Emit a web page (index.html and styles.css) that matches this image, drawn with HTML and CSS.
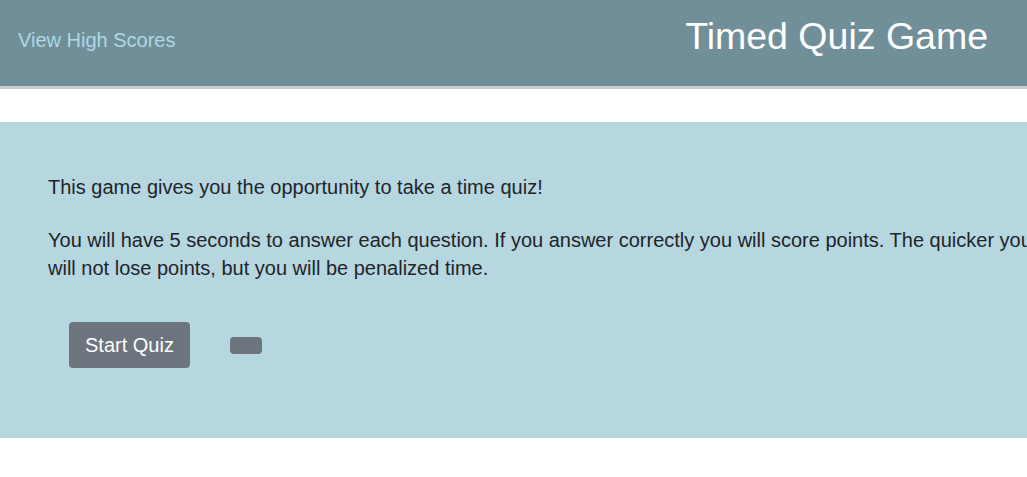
FILE: index.html
```html
<!DOCTYPE html>
<html lang="en">
<head>
<meta charset="utf-8">
<title>Timed Quiz Game</title>
<link rel="stylesheet" href="styles.css">
</head>
<body>
<header class="topbar">
  <a class="scores-link" href="#">View High Scores</a>
  <h1 class="title">Timed Quiz Game</h1>
</header>
<main class="intro">
  <p class="intro-text">This game gives you the opportunity to take a time quiz!</p>
  <p class="intro-text">You will have 5 seconds to answer each question. If you answer correctly you will score points. The quicker you answer the more points you will score. If you answer incorrectly you will not lose points, but you will be penalized time.</p>
  <div class="actions">
    <button class="btn btn-start" type="button">Start Quiz</button>
    <span class="btn btn-empty"></span>
  </div>
</main>
</body>
</html>
```
FILE: styles.css
```css
html { overflow-x: hidden; }
body {
  margin: 0;
  font-family: "Liberation Sans", Arial, sans-serif;
  color: #212529;
  background: #fff;
}
.topbar {
  height: 86px;
  background: #718f99;
  border-bottom: 3px solid #c9ccd0;
  display: flex;
  align-items: center;
  justify-content: space-between;
  padding: 0 39px 0 18px;
}
.scores-link {
  color: #add8e6;
  text-decoration: none;
  font-size: 20px;
  margin-bottom: 6px;
}
.title {
  margin: 0 0 14px;
  font-weight: 400;
  font-size: 37.5px;
  color: #fff;
}
.intro {
  margin-top: 33px;
  background: #b6d6e0;
  padding: 51px 0 70px 48px;
}
.intro-text {
  width: 1605px;
  margin: 0 0 25px;
  font-size: 20px;
  line-height: 28px;
}
.intro-text:last-of-type { margin-bottom: 40px; }
.actions {
  display: flex;
  align-items: center;
  gap: 40px;
  padding-left: 21px;
}
.btn {
  background: #6c757d;
  border: 0;
  border-radius: 4px;
  color: #fff;
}
.btn-start {
  font-family: "Liberation Sans", Arial, sans-serif;
  font-size: 20px;
  height: 46px;
  padding: 0 16px;
}
.btn-empty {
  width: 32px;
  height: 17px;
  display: block;
}
```
